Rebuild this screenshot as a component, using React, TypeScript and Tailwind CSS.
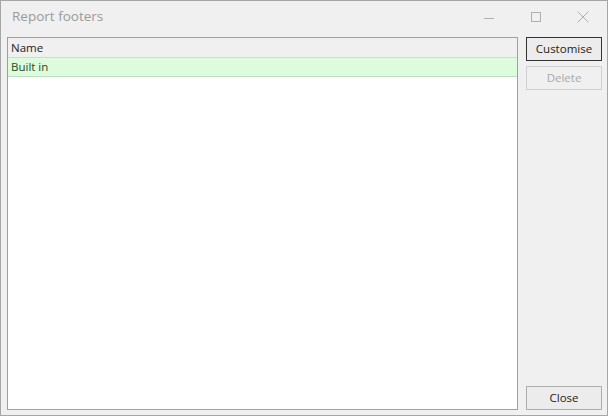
export default function App() {
  return (
    <div
      className="w-[608px] h-[416px] bg-[#f0f0f0] border border-[#a6a6a6] flex flex-col text-[11.5px] text-[#222]"
      style={{ fontFamily: '"Open Sans", "Noto Sans", sans-serif' }}
    >
      {/* Title bar */}
      <div className="h-[36px] flex items-start pt-[4px]">
        <div className="pl-[11px] text-[13.5px] text-[#9a9a9a] leading-[22px]">Report footers</div>
        <div className="ml-auto flex pr-[1px]">
          <div className="w-[47px] h-[24px] flex items-center justify-center">
            <svg width="11" height="11" viewBox="0 0 11 11">
              <path d="M0 6.5h10" stroke="#b0b0b0" strokeWidth="1" />
            </svg>
          </div>
          <div className="w-[47px] h-[24px] flex items-center justify-center">
            <svg width="11" height="11" viewBox="0 0 11 11">
              <rect x="0.5" y="0.5" width="9" height="9" fill="none" stroke="#b0b0b0" />
            </svg>
          </div>
          <div className="w-[46px] h-[24px] flex items-center justify-center">
            <svg width="12" height="12" viewBox="0 0 12 12">
              <path d="M0.5 0.5l11 11M11.5 0.5l-11 11" stroke="#b0b0b0" strokeWidth="1" />
            </svg>
          </div>
        </div>
      </div>

      {/* Body */}
      <div className="flex-1 flex pl-[6px] pr-[5px] pb-[5px] gap-[8px]">
        <div className="w-[511px] border border-[#a0a0a0] bg-white flex flex-col">
          <div className="h-[20px] bg-[#f0f0f0] border-b border-[#d5d5d5] flex items-center pl-[3px]">
            Name
          </div>
          <div className="h-[19px] bg-[#ddfcdd] border-b border-[#b9e3b9] flex items-center pl-[3px] text-[#1f4a1f]">
            Built in
          </div>
        </div>
        <div className="w-[76px] flex flex-col">
          <button className="h-[24px] border border-[#333] bg-[#ececec] text-[#222]">Customise</button>
          <button className="mt-[5px] h-[24px] border border-[#d0d0d0] bg-[#f0f0f0] text-[#a8a8a8]">
            Delete
          </button>
          <button className="mt-auto h-[24px] border border-[#adadad] bg-[#ececec] text-[#222]">Close</button>
        </div>
      </div>
    </div>
  )
}
